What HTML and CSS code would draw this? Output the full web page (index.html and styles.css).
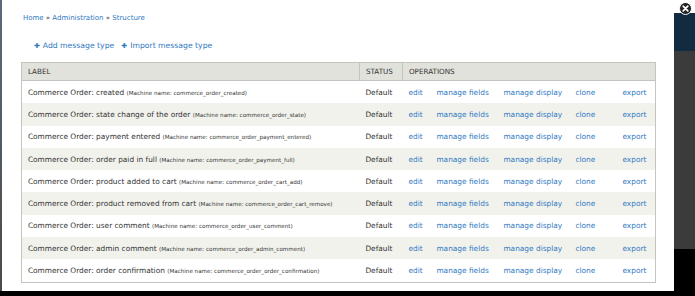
FILE: index.html
```html
<!DOCTYPE html>
<html lang="en">
<head>
    <meta charset="UTF-8">
    <title>Structure</title>
    <link rel="stylesheet" href="styles.css">
</head>
<body>
<div id="stage">
    <div class="edge_left"></div>
    <div id="dialog">
        <div class="breadcrumb">
            <a href="#">Home</a> » <a href="#">Administration</a> » <a href="#">Structure</a>
        </div>
        <ul class="action_links">
            <li><span class="plus">✚</span><a href="#">Add message type</a></li>
            <li><span class="plus">✚</span><a href="#">Import message type</a></li>
        </ul>
        <table class="types">
            <colgroup>
                <col class="c_label">
                <col class="c_status">
                <col class="c_edit">
                <col class="c_fields">
                <col class="c_display">
                <col class="c_clone">
                <col class="c_export">
            </colgroup>
            <thead>
            <tr>
                <th>Label</th>
                <th>Status</th>
                <th colspan="5">Operations</th>
            </tr>
            </thead>
            <tbody>
            <tr>
                <td>Commerce Order: created <small>(Machine name: commerce_order_created)</small></td>
                <td>Default</td>
                <td><a href="#">edit</a></td><td><a href="#">manage fields</a></td><td><a href="#">manage display</a></td><td><a href="#">clone</a></td><td class="last"><a href="#">export</a></td>
            </tr>
            <tr>
                <td>Commerce Order: state change of the order <small>(Machine name: commerce_order_state)</small></td>
                <td>Default</td>
                <td><a href="#">edit</a></td><td><a href="#">manage fields</a></td><td><a href="#">manage display</a></td><td><a href="#">clone</a></td><td class="last"><a href="#">export</a></td>
            </tr>
            <tr>
                <td>Commerce Order: payment entered <small>(Machine name: commerce_order_payment_entered)</small></td>
                <td>Default</td>
                <td><a href="#">edit</a></td><td><a href="#">manage fields</a></td><td><a href="#">manage display</a></td><td><a href="#">clone</a></td><td class="last"><a href="#">export</a></td>
            </tr>
            <tr>
                <td>Commerce Order: order paid in full <small>(Machine name: commerce_order_payment_full)</small></td>
                <td>Default</td>
                <td><a href="#">edit</a></td><td><a href="#">manage fields</a></td><td><a href="#">manage display</a></td><td><a href="#">clone</a></td><td class="last"><a href="#">export</a></td>
            </tr>
            <tr>
                <td>Commerce Order: product added to cart <small>(Machine name: commerce_order_cart_add)</small></td>
                <td>Default</td>
                <td><a href="#">edit</a></td><td><a href="#">manage fields</a></td><td><a href="#">manage display</a></td><td><a href="#">clone</a></td><td class="last"><a href="#">export</a></td>
            </tr>
            <tr>
                <td>Commerce Order: product removed from cart <small>(Machine name: commerce_order_cart_remove)</small></td>
                <td>Default</td>
                <td><a href="#">edit</a></td><td><a href="#">manage fields</a></td><td><a href="#">manage display</a></td><td><a href="#">clone</a></td><td class="last"><a href="#">export</a></td>
            </tr>
            <tr>
                <td>Commerce Order: user comment <small>(Machine name: commerce_order_user_comment)</small></td>
                <td>Default</td>
                <td><a href="#">edit</a></td><td><a href="#">manage fields</a></td><td><a href="#">manage display</a></td><td><a href="#">clone</a></td><td class="last"><a href="#">export</a></td>
            </tr>
            <tr>
                <td>Commerce Order: admin comment <small>(Machine name: commerce_order_admin_comment)</small></td>
                <td>Default</td>
                <td><a href="#">edit</a></td><td><a href="#">manage fields</a></td><td><a href="#">manage display</a></td><td><a href="#">clone</a></td><td class="last"><a href="#">export</a></td>
            </tr>
            <tr>
                <td>Commerce Order: order confirmation <small>(Machine name: commerce_order_order_confirmation)</small></td>
                <td>Default</td>
                <td><a href="#">edit</a></td><td><a href="#">manage fields</a></td><td><a href="#">manage display</a></td><td><a href="#">clone</a></td><td class="last"><a href="#">export</a></td>
            </tr>
            </tbody>
        </table>
    </div>
    <div class="edge_right">
        <div class="er_white"></div>
        <div class="er_navy"></div>
        <div class="er_gray"></div>
        <div class="er_black"></div>
    </div>
    <a href="#" class="close">
        <svg width="13" height="13" viewBox="0 0 13 13">
            <circle cx="6.5" cy="6.5" r="6" fill="#222" stroke="#fff" stroke-width="1"/>
            <path d="M4.2 4.2 L8.8 8.8 M8.8 4.2 L4.2 8.8" stroke="#fff" stroke-width="1.8" stroke-linecap="round"/>
        </svg>
    </a>
</div>
</body>
</html>
```

FILE: styles.css
```css
*{
    margin: 0;
    padding: 0;
    list-style: none;
}
body{
    background-color: #000;
    font-family: "DejaVu Sans", Verdana, sans-serif;
    color: #333;
}
a{
    color: #2f78c2;
    text-decoration: none;
}
#stage{
    display: flex;
    height: 291px;
    position: relative;
}
.edge_left{
    width: 2px;
    background: linear-gradient(#5b6b7a, #4a4a4a);
}
#dialog{
    flex: 1;
    background-color: #fff;
    padding: 13px 18px 0 19px;
}
.edge_right{
    width: 22px;
    display: flex;
    flex-direction: column;
}
.er_white{
    height: 13px;
    background-color: #fff;
}
.er_navy{
    height: 38px;
    background-color: #132b40;
}
.er_gray{
    height: 198px;
    background-color: #3b3b3b;
}
.er_black{
    flex: 1;
    background-color: #000;
}
.close{
    position: absolute;
    left: 679px;
    top: 0;
    width: 13px;
    height: 13px;
}
.breadcrumb{
    font-size: 7px;
    line-height: 10px;
    padding-left: 2px;
}
.action_links{
    display: flex;
    gap: 7px;
    margin: 17px 0 0 13px;
    font-size: 7.7px;
    line-height: 12px;
    height: 22px;
}
.action_links .plus{
    color: #2f78c2;
    font-size: 7px;
    margin-right: 3px;
}
.types{
    width: 634px;
    table-layout: fixed;
    border-collapse: collapse;
    border: 1px solid #c4c5bf;
    font-size: 7.4px;
}
.c_label{ width: 338px; }
.c_status{ width: 43px; }
.c_edit{ width: 28px; }
.c_fields{ width: 67px; }
.c_display{ width: 72px; }
.c_clone{ width: 47px; }
.c_export{ width: 39px; }
.types th{
    background-color: #e1e2dc;
    height: 17px;
    text-align: left;
    font-weight: normal;
    text-transform: uppercase;
    font-size: 7.2px;
    padding: 0 6px;
    border: 1px solid #c4c5bf;
}
.types td{
    height: 22.3px;
    padding: 0 6px;
    white-space: nowrap;
}
.types tbody tr:nth-child(even){
    background-color: #f2f2ed;
}
.types small{
    font-size: 5.6px;
}
.types td.last{
    text-align: right;
    padding-right: 10px;
}
```
